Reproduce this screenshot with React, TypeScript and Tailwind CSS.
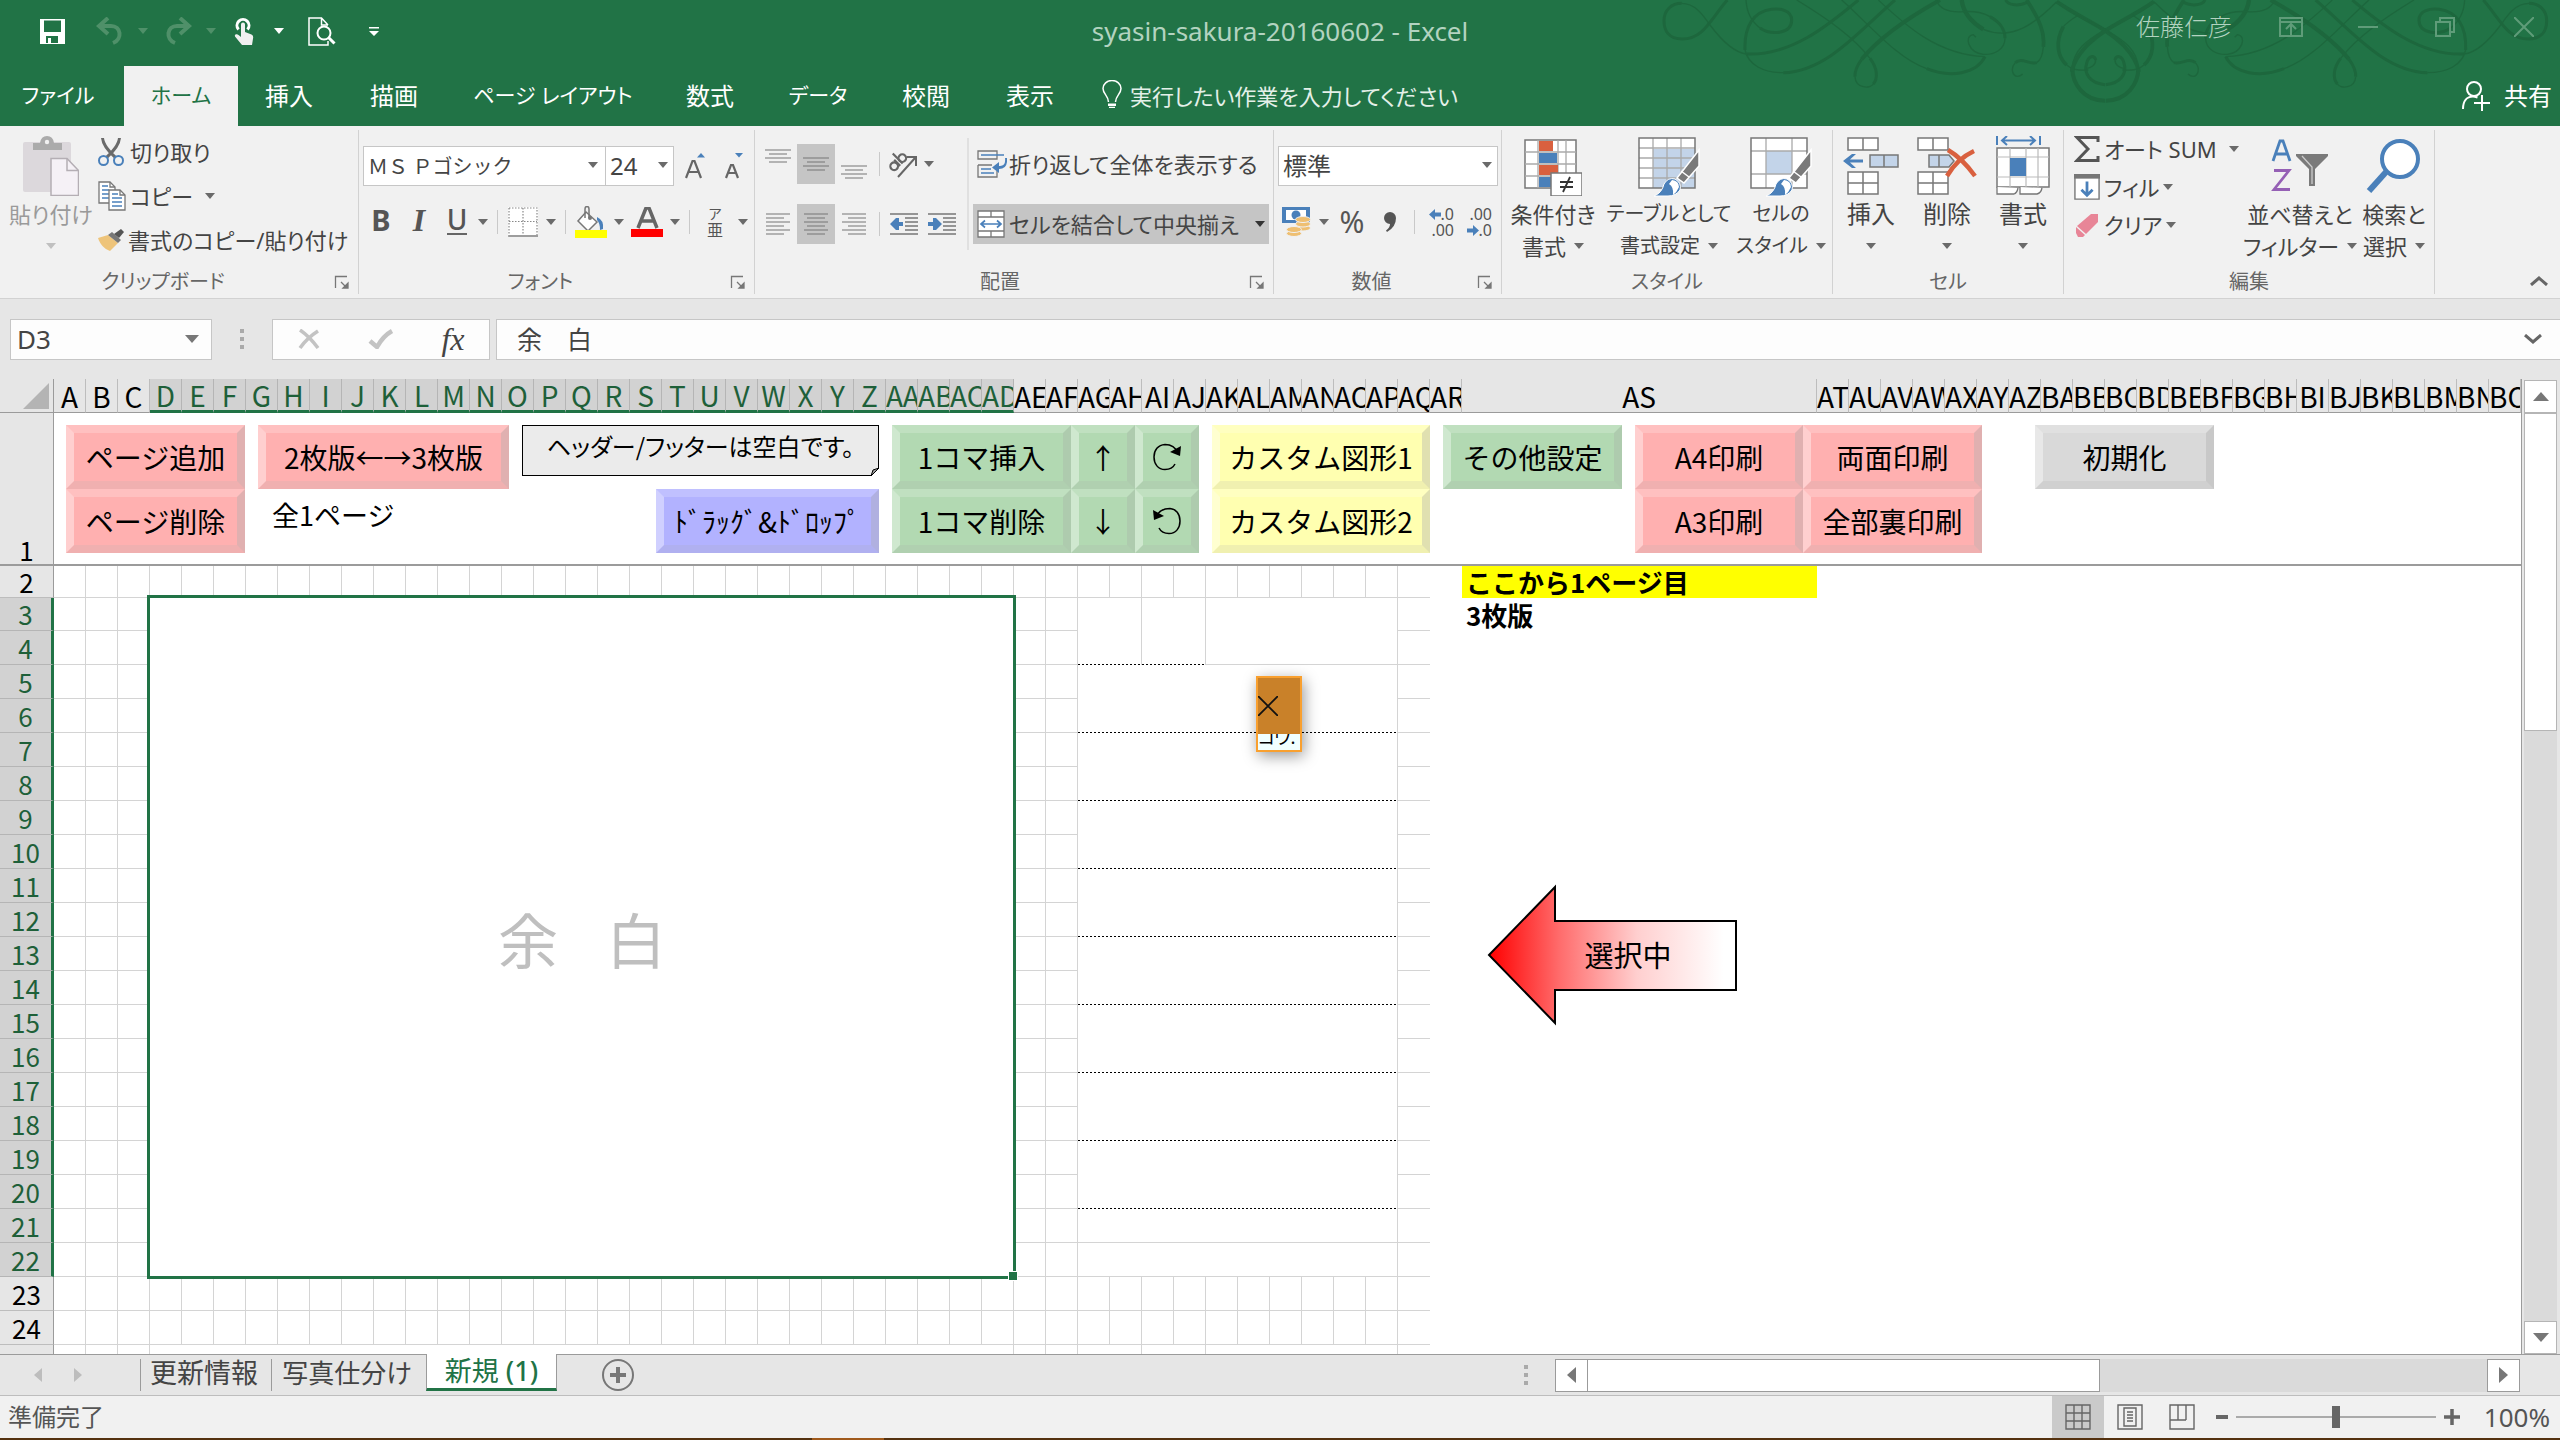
import React from "react";

const UI = "font-['Noto_Sans','Noto_Sans_CJK_JP',sans-serif] [font-feature-settings:'palt']";
const SHEET = "font-['Noto_Sans_CJK_JP',sans-serif] [font-feature-settings:normal]";

/* ---------- small shared pieces ---------- */

function Caret({ className = "text-[#6a6a6a]" }: { className?: string }) {
  return (
    <svg viewBox="0 0 10 6" className={`h-1.5 w-2.5 shrink-0 ${className}`} aria-hidden="true">
      <path d="M0 0h10L5 6z" fill="currentColor" />
    </svg>
  );
}

function CaretButton({ label, className = "w-4" }: { label: string; className?: string }) {
  return (
    <button type="button" aria-label={label} className={`flex h-10 shrink-0 items-center justify-center ${className}`}>
      <Caret />
    </button>
  );
}

function Sep({ className = "w-3" }: { className?: string }) {
  return (
    <span className={`flex h-10 shrink-0 items-center justify-center ${className}`}>
      <span className="h-6 w-px bg-[#c9c9c9]" />
    </span>
  );
}

function IconButton({
  label,
  className = "w-10",
  children,
}: {
  label: string;
  className?: string;
  children: React.ReactNode;
}) {
  return (
    <button type="button" aria-label={label} className={`flex h-10 shrink-0 items-center justify-center ${className}`}>
      {children}
    </button>
  );
}

function Group({
  title,
  launcher,
  className,
  children,
}: {
  title: string;
  launcher?: boolean;
  className: string;
  children: React.ReactNode;
}) {
  return (
    <section aria-label={title} className={`relative my-1 flex shrink-0 flex-col border-r border-[#d2d2d2] ${className}`}>
      <div className="flex h-[138px] items-start">{children}</div>
      <div className={`flex h-7 items-center justify-center pt-1 text-xl text-[#666] ${launcher ? "pr-8" : ""}`}>{title}</div>
      {launcher && (
        <button type="button" aria-label={`${title}の詳細`} className="absolute right-2 bottom-1 h-4 w-4">
          <svg viewBox="0 0 16 16" className="h-4 w-4" fill="none" stroke="#777" strokeWidth="1.3">
            <path d="M1.5 14V2.5H13M7 8l5 5" />
            <path d="M14 9v5H9z" fill="#777" />
          </svg>
        </button>
      )}
    </section>
  );
}

function BigButton({
  icon,
  line1,
  line2,
  className,
  muted,
  text = "text-[22px]",
}: {
  icon: React.ReactNode;
  line1: string;
  line2?: string;
  className: string;
  muted?: boolean;
  text?: string;
}) {
  return (
    <button
      type="button"
      className={`flex shrink-0 flex-col items-center whitespace-nowrap ${muted ? "text-[#9a9a9a]" : "text-[#444]"} ${className}`}
    >
      <span className="mt-1 flex h-16 items-center justify-center">{icon}</span>
      <span className={`h-8 leading-8 ${text}`}>{line1}</span>
      <span className={`flex h-8 items-center gap-2 leading-8 ${text}`}>
        {line2}
        <Caret className={muted ? "text-[#c0c0c0]" : "text-[#6a6a6a]"} />
      </span>
    </button>
  );
}

/* ---------- title bar ---------- */

function Ornament() {
  const half = (
    <g>
      <g strokeWidth="9">
        <path d="M262 0C210 60 190 117 127 117C85 117 72 90 72 62C72 30 95 10 125 10" />
        <path d="M320 162C450 168 560 80 655 0" />
        <path d="M360 84C390 105 455 105 455 60C455 30 420 25 395 28C340 35 312 80 315 150" />
        <path d="M430 218C560 215 660 90 765 0" />
        <path d="M665 178C720 110 810 50 900 0" strokeWidth="12" />
        <path d="M665 178C650 198 644 215 645 230M690 175C713 205 714 235 700 252" />
        <path d="M860 206C930 234 1010 222 1035 170" />
        <path d="M1050 50C1085 70 1095 90 1095 115" />
        <path d="M965 0C970 40 1000 70 1030 88" strokeWidth="13" />
        <path d="M1160 0C1200 60 1215 100 1210 140" strokeWidth="11" />
        <path d="M1190 188C1175 192 1165 186 1150 182C1140 180 1132 182 1126 188" />
        <path d="M1250 5C1330 60 1395 80 1450 135C1480 168 1494 195 1496 215" strokeWidth="12" />
        <path d="M1395 302C1330 302 1297 250 1297 205" strokeWidth="12" />
        <path d="M1270 80C1245 125 1252 170 1280 195" strokeWidth="11" />
        <path d="M1395 254C1350 250 1330 220 1340 190C1345 165 1365 165 1367 180" />
        <path d="M1097 0C1105 18 1140 18 1160 8" />
      </g>
      <g strokeWidth="4">
        <path d="M125 10C170 10 195 55 210 75C240 115 280 158 320 162" />
        <path d="M318 0C320 40 335 65 360 84" />
        <path d="M315 150C325 195 370 218 430 218" />
        <path d="M470 0C560 55 640 110 690 175" />
        <path d="M645 230C647 265 690 268 700 252" />
        <path d="M605 0C690 75 770 175 860 206" />
        <path d="M715 0C790 70 890 165 1035 170" />
        <path d="M888 0C900 30 930 38 970 35C1005 33 1030 38 1050 50" />
        <path d="M1095 115C1095 150 1060 165 1030 163C985 158 970 108 1000 104L1008 112" />
        <path d="M1030 88C1120 125 1190 65 1250 5" />
        <path d="M1210 140C1208 165 1200 182 1190 188M1126 188C1110 205 1118 228 1132 229C1140 229 1145 225 1148 222" />
        <path d="M1315 45C1295 58 1280 68 1270 80M1280 195C1300 213 1320 210 1345 210" />
        <path d="M1297 205C1300 150 1340 120 1395 90C1440 65 1500 45 1540 5" />
        <path d="M1367 180C1367 196 1352 204 1340 205" />
      </g>
    </g>
  );
  return (
    <svg
      viewBox="0 0 2760 378"
      className="pointer-events-none absolute top-0 right-0 h-[126px] w-[920px]"
      fill="none"
      stroke="#1d673d"
      aria-hidden="true"
    >
      {half}
      <g transform="translate(2792 0) scale(-1 1)">{half}</g>
    </svg>
  );
}

function TitleBar() {
  return (
    <div className="relative flex h-[66px] items-center justify-between pr-2 pb-1 pl-[30px]">
      <div className="flex items-center text-white">
        <IconButton label="上書き保存" className="w-11">
          <svg viewBox="0 0 25 25" className="h-[25px] w-[25px]">
            <path d="M0 0h25v25H0zM4 1.500v11.500h17V1.500zM6 17v7h2v-5h3v5h7v-7z" fill="#fff" fillRule="evenodd" />
          </svg>
        </IconButton>
        <IconButton label="元に戻す" className="ml-4 w-10">
          <svg viewBox="0 0 28 28" className="h-7 w-7" fill="none" stroke="#4f9069" strokeWidth="4">
            <path d="M12 1L3 9l9 8" />
            <path d="M4 9h11c10 0 12 13 2 17" />
          </svg>
        </IconButton>
        <span className="w-7 pl-2"><Caret className="text-[#4f9069]" /></span>
        <IconButton label="やり直し" className="w-10">
          <svg viewBox="0 0 28 28" className="h-7 w-7" fill="none" stroke="#4f9069" strokeWidth="4">
            <path d="M16 1l9 8-9 8" />
            <path d="M24 9H13C3 9 1 22 11 26" />
          </svg>
        </IconButton>
        <span className="w-7 pl-2"><Caret className="text-[#4f9069]" /></span>
        <IconButton label="タッチ/マウス モードの切り替え" className="w-9">
          <svg viewBox="0 0 20 27" className="h-[27px] w-5">
            <path d="M4.500 11.500A6 6 0 1 1 13.500 11.500" fill="none" stroke="#fff" strokeWidth="3" />
            <path d="M7 6.500q0-2 2-2t2 2V14l6.500 2.500q2 1 1.700 3L18 27H8L1 18.500q-.8-1.800 1-2.300 1.500-.3 2.500.8L7 19z" fill="#f0f0f0" />
          </svg>
        </IconButton>
        <span className="w-7 pl-3"><Caret className="text-white" /></span>
        <IconButton label="印刷プレビュー" className="ml-1 w-14">
          <svg viewBox="0 0 28 29" className="h-[29px] w-7" fill="none" stroke="#fff" strokeWidth="1.500">
            <path d="M20 8L13.500 1H1v27h19v-4M13.500 1v7H20" />
            <circle cx="16" cy="16" r="6.500" strokeWidth="2" />
            <path d="M20.500 20.500l6 6" strokeWidth="3" />
          </svg>
        </IconButton>
        <IconButton label="クイック アクセス ツール バーのユーザー設定" className="ml-3 w-6">
          <svg viewBox="0 0 10 9" className="h-[9px] w-2.5" fill="#fff">
            <path d="M0 0h10v1.500H0zM0 4h10L5 9z" />
          </svg>
        </IconButton>
      </div>
      <h1 className="absolute left-1/2 -translate-x-1/2 text-[26px] whitespace-nowrap text-[#b3d3c0]">
        syasin-sakura-20160602 - Excel
      </h1>
      <div className="flex items-center pb-2 text-[#5f9c79]">
        <span className="mr-7 text-2xl font-light text-[#b3d3c0]">佐藤仁彦</span>
        <IconButton label="リボンの表示オプション" className="w-[62px]">
          <svg viewBox="0 0 24 20" className="h-5 w-6" fill="none" stroke="currentColor" strokeWidth="2">
            <path d="M1 1h22v18H1zM1 5h22M12 18V8M7 12l5-5 5 5" />
          </svg>
        </IconButton>
        <IconButton label="最小化" className="w-[92px]">
          <span className="h-0.5 w-5 bg-[#5f9c79]" />
        </IconButton>
        <IconButton label="元に戻す (縮小)" className="w-[62px]">
          <svg viewBox="0 0 20 20" className="h-5 w-5" fill="none" stroke="currentColor" strokeWidth="2">
            <path d="M1 5h14v14H1zM5 5V1h14v14h-4" />
          </svg>
        </IconButton>
        <IconButton label="閉じる" className="ml-5 w-14">
          <svg viewBox="0 0 20 20" className="h-5 w-5" fill="none" stroke="currentColor" strokeWidth="2">
            <path d="M0 0l20 20M20 0L0 20" />
          </svg>
        </IconButton>
      </div>
    </div>
  );
}

function RibbonTabs() {
  const tabs = [
    { name: "ファイル", w: "w-[124px] pr-2 text-[21px]" },
    { name: "ホーム", w: "w-[114px] text-[21px]", active: true },
    { name: "挿入", w: "w-[102px] text-2xl" },
    { name: "描画", w: "w-[108px] text-2xl" },
    { name: "ページ レイアウト", w: "w-[210px] text-[21px]" },
    { name: "数式", w: "w-[104px] text-2xl" },
    { name: "データ", w: "w-[112px] text-[21px]" },
    { name: "校閲", w: "w-[104px] text-2xl" },
    { name: "表示", w: "w-[104px] text-2xl" },
  ];
  return (
    <nav className="relative flex h-[60px] items-stretch text-[22px] text-white">
      {tabs.map((t) => (
        <button
          key={t.name}
          type="button"
          className={`${t.w} shrink-0 whitespace-nowrap ${t.active ? "bg-[#f1f1f1] text-[#217346]" : ""}`}
        >
          {t.name}
        </button>
      ))}
      <button type="button" className="flex items-center gap-2 pl-5 text-[#e4f0e9]">
        <svg viewBox="0 0 20 28" className="mb-1 h-7 w-5" fill="none" stroke="#fff" strokeWidth="1.500">
          <path d="M6.500 22c0-6-5.500-8-5.500-13.500a9 8 0 0 1 18 0C19 14 13.500 16 13.500 22" />
          <path d="M6 23.500h8v2.500H6z" fill="#fff" stroke="none" />
          <path d="M7 27.500h6" />
        </svg>
        実行したい作業を入力してください
      </button>
      <button type="button" className="ml-auto flex items-center gap-3 pr-2 text-2xl">
        <svg viewBox="0 0 30 30" className="h-[30px] w-[30px]" fill="none" stroke="#fff" strokeWidth="2">
          <circle cx="12" cy="8" r="7" />
          <path d="M1 28c0-8 4-12.500 10-12.500 2 0 3 .5 4.500 1M12 22h16M20 14v16" />
        </svg>
        共有
      </button>
    </nav>
  );
}

/* ---------- ribbon icons ---------- */

const PasteIcon = () => (
  <svg viewBox="0 0 56 60" className="h-[60px] w-14">
    <rect x="0" y="6" width="48" height="50" rx="2" fill="#dcd8dc" />
    <path d="M10 14V7h7q1-7 7-7t7 7h8v7z" fill="#ababab" />
    <circle cx="24" cy="6" r="2.200" fill="#f1f1f1" />
    <path d="M28 22.500h16l11.500 12v25H28z" fill="#f5f1f6" stroke="#b4aeb4" strokeWidth="1.500" />
    <path d="M44 22.500v12h11.500" fill="none" stroke="#b4aeb4" strokeWidth="1.500" />
  </svg>
);

const ScissorsIcon = () => (
  <svg viewBox="0 0 26 28" className="h-7 w-[26px]" fill="none">
    <path d="M4.500 0C5 6 11 14 17.500 19.500M21.500 0C21 6 15 14 8.500 19.500" stroke="#6a6a6a" strokeWidth="3" />
    <circle cx="5.500" cy="22.500" r="4.500" stroke="#4a80ba" strokeWidth="2" />
    <circle cx="20.500" cy="22.500" r="4.500" stroke="#4a80ba" strokeWidth="2" />
  </svg>
);

const CopyIcon = () => (
  <svg viewBox="0 0 28 30" className="h-[30px] w-7" stroke="#777" strokeWidth="1.300">
    <path d="M1 1h11l5 5v16H1z" fill="#fff" />
    <path d="M12 1v5h5" fill="none" />
    <path d="M4 5h6M4 9h7M4 13h7M4 17h7" stroke="#4a80ba" />
    <path d="M11 9h11l5 5v15H11z" fill="#fff" />
    <path d="M22 9v5h5" fill="none" />
    <path d="M14 13h6M14 17h10M14 21h10M14 25h10" stroke="#4a80ba" />
  </svg>
);

const BrushIcon = () => (
  <svg viewBox="0 0 26 22" className="h-[22px] w-[26px]">
    <path d="M0 9l10-3 10 8-8 8C6 20 2 15 0 9z" fill="#eec47a" />
    <path d="M10 6l4-3 9 8-3 3z" fill="#777" />
    <path d="M16 5l7-5 3 3-5 6z" fill="#555" />
  </svg>
);

function Lines({ widths }: { widths: "center" | "left" | "right" | "even" }) {
  const d = {
    center: "M0 1h26M4 5h18M0 9h26M4 13h18",
    even: "M0 1h24M3 5h18M0 9h24M3 13h18M0 17h24M3 21h18",
    left: "M0 1h24M0 5h18M0 9h24M0 13h18M0 17h24M0 21h18",
    right: "M0 1h24M6 5h18M0 9h24M6 13h18M0 17h24M6 21h18",
  }[widths];
  return widths === "center" ? (
    <svg viewBox="0 0 26 14" className="h-3.5 w-[26px]" stroke="#777" strokeWidth="1.200"><path d={d} /></svg>
  ) : (
    <svg viewBox="0 0 24 22" className="h-[22px] w-6" stroke="#777" strokeWidth="1.200"><path d={d} /></svg>
  );
}

function IndentIcon({ flip }: { flip?: boolean }) {
  return (
    <svg viewBox="0 0 28 22" className="h-[22px] w-7" fill="none" stroke="#777" strokeWidth="1.300">
      <path d="M0 1h28M15 5h13M15 9h13M15 13h13M15 17h13M0 21h28" />
      {flip ? (
        <path d="M0 9h5V5h3l6 6-6 6H5v-4H0z" fill="#4a80ba" stroke="none" />
      ) : (
        <path d="M13 9H9V5H6l-6 6 6 6h3v-4h4z" fill="#4a80ba" stroke="none" />
      )}
    </svg>
  );
}

const BordersIcon = () => (
  <svg viewBox="0 0 30 30" className="h-[30px] w-[30px]" fill="none" stroke="#888" strokeWidth="1.200">
    <path d="M0 0h30v28H0z" fill="#fff" stroke="none" />
    <path d="M1 1h28v27M1 1v27M15 1v27M1 14.500h28" strokeDasharray="1.500 1.500" />
    <path d="M0 29h30" stroke="#666" />
  </svg>
);

const FillIcon = () => (
  <svg viewBox="0 0 32 32" className="h-8 w-8">
    <path d="M11 6l11 10-9 9L3 15z" fill="#fff" stroke="#777" strokeWidth="1.500" />
    <path d="M10 12V3q0-2.500 2-2.500t2 2.500v9" fill="none" stroke="#777" strokeWidth="1.500" />
    <circle cx="15" cy="12" r="2" fill="#777" />
    <path d="M22 11q7 3 6 12l-3 1q0-7-3-10z" fill="#4a80ba" />
    <rect y="24" width="32" height="8" fill="#ff0" />
  </svg>
);

const FontColorIcon = () => (
  <svg viewBox="0 0 32 30" className="h-[30px] w-8">
    <path d="M7 21L15 1h3l8 20M10.500 14h12" fill="none" stroke="#666" strokeWidth="3.500" />
    <rect y="22" width="32" height="8" fill="#f00" />
  </svg>
);

const OrientationIcon = () => (
  <svg viewBox="0 0 30 28" className="h-7 w-[30px]" fill="none" stroke="#666">
    <path d="M10 27L27 8M19 7h9v9" strokeWidth="2" />
    <g transform="rotate(-45 9 12)" strokeWidth="2.200">
      <circle cx="4" cy="13" r="3.800" />
      <path d="M8.500 8.500V17M12 3v14" />
      <circle cx="15.500" cy="13" r="3.800" />
    </g>
  </svg>
);

const WrapIcon = () => (
  <svg viewBox="0 0 30 28" className="h-7 w-[30px]" fill="none">
    <path d="M1 1h19v8H1zM1 15h14M1 15v12h19v-6" stroke="#777" strokeWidth="1.300" />
    <path d="M4 5h23M4 19h10M4 23h13" stroke="#4a80ba" strokeWidth="1.500" />
    <path d="M28 8q1 8-5 8h-1v-4l-7 5.500 7 5.500v-4q9 0 8-11z" fill="#4a80ba" />
  </svg>
);

const MergeIcon = () => (
  <svg viewBox="0 0 28 28" className="h-7 w-7" fill="none">
    <path d="M1 1h26v26H1z" fill="#fff" />
    <path d="M1 1h26v26H1zM1 7h26M1 21h26M14 1v6M14 21v6" stroke="#777" strokeWidth="1.300" />
    <path d="M4 14h20M8 10.500L4 14l4 3.500M20 10.500l4 3.500-4 3.500" stroke="#4a80ba" strokeWidth="1.700" />
  </svg>
);

const CurrencyIcon = () => (
  <svg viewBox="0 0 30 30" className="h-[30px] w-[30px]">
    <path d="M0 0h28v16H0z" fill="#4a80ba" />
    <path d="M4 3h20v10H4z" fill="#fff" />
    <circle cx="14" cy="8" r="4.500" fill="#4a80ba" />
    <g fill="#eebf72" stroke="#f1f1f1" strokeWidth="1">
      <ellipse cx="21" cy="21" rx="7.500" ry="3" /><ellipse cx="21" cy="17" rx="7.500" ry="3" /><ellipse cx="21" cy="12.500" rx="7.500" ry="3" />
      <ellipse cx="12" cy="26.500" rx="7.500" ry="3" /><ellipse cx="12" cy="22.500" rx="7.500" ry="3" />
    </g>
  </svg>
);

function DecimalIcon({ more }: { more?: boolean }) {
  return (
    <span className="flex w-[30px] flex-col text-base leading-4 text-[#555]">
      <span className="flex items-center justify-end">
        {more && (
          <svg viewBox="0 0 12 11" className="h-[11px] w-3"><path d="M0 5.500L6 0v3.500h6v4H6V11z" fill="#4a80ba" /></svg>
        )}
        {more ? ".0" : ".00"}
      </span>
      <span className="flex items-center justify-end">
        {!more && (
          <svg viewBox="0 0 12 11" className="h-[11px] w-3"><path d="M12 5.500L6 0v3.500H0v4h6V11z" fill="#4a80ba" /></svg>
        )}
        {more ? ".00" : ".0"}
      </span>
    </span>
  );
}

const ConditionalIcon = () => (
  <svg viewBox="0 0 58 60" className="h-[60px] w-[58px]">
    <path d="M1 4h51v48H1z" fill="#fff" stroke="#777" strokeWidth="1.500" />
    <path d="M1 16h51M1 28h51M1 40h51M14 4v48M34 4v48M42 4v48" stroke="#aaa" strokeWidth="1.300" />
    <path d="M15 5h14v10H15zM15 29h19v10H15z" fill="#d9603f" />
    <path d="M15 17h18v10H15zM15 41h12v10H15z" fill="#4a80ba" />
    <path d="M27 37h31v23H27z" fill="#fff" stroke="#777" strokeWidth="1.500" />
    <path d="M36 46h13M36 51h13M46 41l-7 15" stroke="#333" strokeWidth="1.800" />
  </svg>
);

function StyleBrushIcon({ cell }: { cell?: boolean }) {
  return (
    <svg viewBox="0 0 62 62" className="h-[62px] w-[62px]">
      <path d="M1 3h56v50H1z" fill="#fff" />
      {cell ? <path d="M16 16h26v23H16z" fill="#c3d4e9" /> : <path d="M15 14h42v39H15z" fill="#c3d4e9" />}
      {cell ? (
        <path d="M1 16h56M1 39h56M16 3v50M42 3v50" stroke="#aaa" strokeWidth="1.300" />
      ) : (
        <path d="M1 13h56M1 23h56M1 33h56M1 43h56M15 3v50M29 3v50M43 3v50" stroke="#aaa" strokeWidth="1.300" />
      )}
      <path d="M1 3h56v50H1z" fill="none" stroke="#777" strokeWidth="1.500" />
      <path d="M61 15v16L46 48l-7-5z" fill="#7a7a7a" stroke="#fff" strokeWidth="1.500" />
      <path d="M43 36l8 6" stroke="#fff" strokeWidth="1.500" />
      <path d="M16 61q8-3 10-12 4-7 11-5 7 4 5 11-4 6-12 6z" fill="#4a80ba" stroke="#fff" strokeWidth="1" />
      <path d="M34 45q7 1 7 7-2 5-6 8 1-8-4-11z" fill="#fff" />
    </svg>
  );
}

const InsertIcon = () => (
  <svg viewBox="0 0 56 58" className="h-[58px] w-14" fill="#fff" stroke="#777" strokeWidth="1.500">
    <path d="M5 1h30v12H5zM20 1v12M5 35h30v22H5zM20 35v22M5 46h30" />
    <path d="M27 18h28v12H27zM41 18v12" fill="#c3d4e9" />
    <path d="M0 24l9-7h4l-6 5.500h13v3H7L13 31H9z" fill="#4a80ba" stroke="none" />
  </svg>
);

const DeleteIcon = () => (
  <svg viewBox="0 0 60 58" className="h-[58px] w-[60px]" fill="#fff" stroke="#777" strokeWidth="1.500">
    <path d="M1 1h30v12H1zM16 1v12M1 35h30v22H1zM16 35v22M1 46h30" />
    <path d="M12 18h20l5 6-5 6H12zM22 18v12" fill="#c3d4e9" />
    <path d="M31 13q14 8 27 26M57 14Q40 22 30 39" fill="none" stroke="#d9603f" strokeWidth="4.500" />
  </svg>
);

const FormatIcon = () => (
  <svg viewBox="0 0 54 60" className="h-[60px] w-[54px]" fill="none">
    <path d="M1 12h52v39H1z" fill="#fff" stroke="#777" strokeWidth="1.500" />
    <path d="M1 21h52M1 41h52M14 12v39M30 12v39M42 12v39" stroke="#bbb" strokeWidth="1.200" />
    <path d="M14 22h16v18H14z" fill="#4a80ba" />
    <path d="M1 51v7h17q3-1 4-6M24 51v7h17q4-1 5-6" fill="#fff" stroke="#777" strokeWidth="1.300" />
    <path d="M1 0v9M44 0v9M6 4.500h33M11 0L6 4.500 11 9M34 0l5 4.500L34 9" stroke="#4a80ba" strokeWidth="2" />
  </svg>
);

const SortIcon = () => (
  <svg viewBox="0 0 58 54" className="h-[54px] w-[58px]" fill="none">
    <path d="M2 22L9 2h3l7 20M5 15h11" stroke="#4a80ba" strokeWidth="2.800" />
    <path d="M3 31.500h15L3 50.500h16" stroke="#9560b5" strokeWidth="2.800" />
    <path d="M25 15h32v2L44 30v17h-6V30L25 17z" fill="#7a7a7a" />
    <path d="M31 17l10 11v17" stroke="#ccc" strokeWidth="1.300" />
  </svg>
);

const FindIcon = () => (
  <svg viewBox="0 0 56 56" className="h-14 w-14" fill="none" stroke="#4a80ba">
    <circle cx="34" cy="21" r="18" fill="#fff" strokeWidth="4" />
    <path d="M20 34L3 53" strokeWidth="6" />
  </svg>
);

/* ---------- ribbon ---------- */

function Ribbon() {
  return (
    <div className="flex h-[173px] shrink-0 border-b border-[#d2d2d2] bg-[#f1f1f1] text-[22px] text-[#444]">
      <Group title="クリップボード" launcher className="w-[359px]">
        <BigButton icon={<PasteIcon />} line1="貼り付け" muted className="w-[98px] pl-1" />
        <div className="flex flex-col whitespace-nowrap text-[22px]">
          <button type="button" className="flex h-11 items-center gap-1.5">
            <ScissorsIcon />切り取り
          </button>
          <button type="button" className="flex h-11 items-center gap-1">
            <CopyIcon />コピー<span className="pl-2"><Caret /></span>
          </button>
          <button type="button" className="flex h-11 items-center gap-1">
            <BrushIcon />書式のコピー/貼り付け
          </button>
        </div>
      </Group>

      <Group title="フォント" launcher className="w-[396px] px-1">
        <div className="flex flex-col gap-4 pt-4">
          <div className="flex h-10 items-center">
            <label className="relative">
              <select aria-label="フォント" className={`h-10 w-[243px] appearance-none border border-[#c6c6c6] bg-white px-1 text-xl ${SHEET}`}>
                <option>ＭＳ Ｐゴシック</option>
              </select>
              <span className="pointer-events-none absolute top-4 right-2 flex"><Caret /></span>
            </label>
            <label className="relative -ml-px">
              <select aria-label="フォント サイズ" className="h-10 w-[69px] appearance-none border border-[#c6c6c6] bg-white px-1 text-2xl">
                <option>24</option>
              </select>
              <span className="pointer-events-none absolute top-4 right-1.5 flex"><Caret /></span>
            </label>
            <IconButton label="フォント サイズの拡大" className="ml-1 w-9">
              <svg viewBox="0 0 22 26" className="h-[26px] w-[22px]" fill="none">
                <path d="M1 25L7.500 8h2L16 25M4 19h9" stroke="#666" strokeWidth="2.200" />
                <path d="M12 4.500h8L16 0z" fill="#4a80ba" />
              </svg>
            </IconButton>
            <IconButton label="フォント サイズの縮小" className="w-10">
              <svg viewBox="0 0 22 26" className="h-[26px] w-[22px]" fill="none">
                <path d="M3 25L8 12h2l5 13M5 20h8" stroke="#666" strokeWidth="2.200" />
                <path d="M12 0h8l-4 4.500z" fill="#4a80ba" />
              </svg>
            </IconButton>
          </div>
          <div className="flex h-10 items-center text-[#555]">
            <IconButton label="太字" className="w-9 pb-1"><span className="text-[29px] leading-8 font-bold">B</span></IconButton>
            <IconButton label="斜体" className="w-10 pb-1"><span className="font-['Liberation_Serif',serif] text-[32px] leading-8 font-bold italic">I</span></IconButton>
            <IconButton label="下線" className="w-9 pb-1"><span className="border-b-2 border-[#666] text-[28px] leading-7 font-medium">U</span></IconButton>
            <CaretButton label="下線の種類" />
            <Sep />
            <IconButton label="罫線"><BordersIcon /></IconButton>
            <CaretButton label="罫線の種類" />
            <Sep />
            <IconButton label="塗りつぶしの色"><FillIcon /></IconButton>
            <CaretButton label="塗りつぶしの色の一覧" />
            <IconButton label="フォントの色"><FontColorIcon /></IconButton>
            <CaretButton label="フォントの色の一覧" />
            <Sep />
            <IconButton label="ふりがな">
              <span className="flex flex-col items-center text-sm leading-4">
                <span>ア</span>
                <span className="text-base leading-4">亜</span>
              </span>
            </IconButton>
            <CaretButton label="ふりがなの設定" />
          </div>
        </div>
      </Group>

      <Group title="配置" launcher className="w-[519px] pl-1">
        <div className="flex flex-col gap-5 pt-3.5">
          <div className="flex h-10 items-center">
            <IconButton label="上揃え" className="w-[38px] pb-4"><Lines widths="center" /></IconButton>
            <IconButton label="上下中央揃え" className="w-[38px] bg-[#c5c5c5]"><Lines widths="center" /></IconButton>
            <IconButton label="下揃え" className="w-[38px] pt-4"><Lines widths="center" /></IconButton>
            <Sep className="w-3" />
            <IconButton label="方向" className="w-9"><OrientationIcon /></IconButton>
            <CaretButton label="方向の種類" />
          </div>
          <div className="flex h-10 items-center">
            <IconButton label="左揃え" className="w-[38px]"><Lines widths="left" /></IconButton>
            <IconButton label="中央揃え" className="w-[38px] bg-[#c5c5c5]"><Lines widths="even" /></IconButton>
            <IconButton label="右揃え" className="w-[38px]"><Lines widths="right" /></IconButton>
            <Sep className="w-3" />
            <IconButton label="インデントを減らす" className="w-[38px]"><IndentIcon /></IconButton>
            <IconButton label="インデントを増やす" className="w-[38px]"><IndentIcon flip /></IconButton>
          </div>
        </div>
        <div className="mt-2 ml-1.5 h-28 w-0.5 bg-[#e0e0e0]" />
        <div className="ml-1 flex flex-col gap-5 pt-3.5 whitespace-nowrap">
          <button type="button" className="flex h-10 items-center gap-0.5 pl-1">
            <WrapIcon />折り返して全体を表示する
          </button>
          <div className="flex h-10 w-[296px] items-center justify-between bg-[#c5c5c5] pr-1">
            <button type="button" className="flex items-center gap-1 pl-1">
              <MergeIcon />セルを結合して中央揃え
            </button>
            <button type="button" aria-label="結合の種類"><Caret className="text-[#333]" /></button>
          </div>
        </div>
      </Group>

      <Group title="数値" launcher className="w-[228px] px-1">
        <div className="flex flex-col gap-4 pt-4">
          <label className="relative">
            <select aria-label="表示形式" className="h-10 w-[220px] appearance-none border border-[#c6c6c6] bg-white px-1 text-2xl">
              <option>標準</option>
            </select>
            <span className="pointer-events-none absolute top-4 right-1.5 flex"><Caret /></span>
          </label>
          <div className="flex h-10 items-center text-[#555]">
            <IconButton label="通貨表示形式" className="w-[38px]"><CurrencyIcon /></IconButton>
            <CaretButton label="通貨の種類" />
            <IconButton label="パーセント スタイル"><span className="text-3xl leading-8">%</span></IconButton>
            <IconButton label="桁区切りスタイル" className="w-9">
              <svg viewBox="0 0 12 20" className="h-5 w-3" fill="#555"><path d="M6 0a6 6 0 0 1 6 6q0 9-9 14l-1-1.500q4-3 4-6.500A6 6 0 1 1 6 0z" /></svg>
            </IconButton>
            <Sep className="w-3" />
            <IconButton label="小数点以下の表示桁数を増やす" className="w-[38px]"><DecimalIcon more /></IconButton>
            <IconButton label="小数点以下の表示桁数を減らす" className="w-[38px]"><DecimalIcon /></IconButton>
          </div>
        </div>
      </Group>

      <Group title="スタイル" className="w-[331px]">
        <BigButton icon={<ConditionalIcon />} line1="条件付き" line2="書式" className="w-[102px]" />
        <BigButton icon={<StyleBrushIcon />} line1="テーブルとして" line2="書式設定" text="text-xl" className="w-[130px]" />
        <BigButton icon={<StyleBrushIcon cell />} line1="セルの" line2="スタイル" text="text-xl" className="w-[94px]" />
      </Group>

      <Group title="セル" className="w-[231px]">
        <BigButton icon={<InsertIcon />} line1="挿入" className="w-[76px]" text="text-2xl" />
        <BigButton icon={<DeleteIcon />} line1="削除" className="w-[76px]" text="text-2xl" />
        <BigButton icon={<FormatIcon />} line1="書式" className="w-[76px]" text="text-2xl" />
      </Group>

      <Group title="編集" className="w-[371px]">
        <div className="flex w-[180px] flex-col pl-2.5 whitespace-nowrap">
          <button type="button" className="flex h-[38px] items-center gap-1">
            <svg viewBox="0 0 26 26" className="h-[26px] w-[26px]" fill="none" stroke="#555" strokeWidth="3">
              <path d="M24 6V1.500H3L14 13 3 24.500h21V20" />
            </svg>
            オート SUM<span className="pl-2"><Caret /></span>
          </button>
          <button type="button" className="flex h-[38px] items-center gap-1">
            <svg viewBox="0 0 28 28" className="h-[26px] w-[26px]">
              <path d="M1 1h26v26H1z" fill="#fff" stroke="#777" strokeWidth="1.500" />
              <path d="M0 0h28v5H0z" fill="#777" />
              <path d="M14 8v14M8 17l6 6 6-6" fill="none" stroke="#4a80ba" strokeWidth="3" />
            </svg>
            フィル<Caret />
          </button>
          <button type="button" className="flex h-[38px] items-center gap-1">
            <svg viewBox="0 0 24 24" className="h-6 w-[26px]">
              <path d="M16 1h7v8L11 21 2 13z" fill="#e88597" />
              <path d="M1 14l9 8-2 2H3l-2-4z" fill="#e88597" />
            </svg>
            クリア<Caret />
          </button>
        </div>
        <BigButton icon={<SortIcon />} line1="並べ替えと" line2="フィルター" className="w-[112px]" />
        <BigButton icon={<FindIcon />} line1="検索と" line2="選択" className="w-[76px]" />
      </Group>

      <div className="flex flex-1 items-end justify-end">
        <button type="button" aria-label="リボンを折りたたむ" className="mr-2 mb-2 p-1">
          <svg viewBox="0 0 18 10" className="h-2.5 w-[18px]" fill="none" stroke="#666" strokeWidth="3">
            <path d="M1 9l8-7 8 7" />
          </svg>
        </button>
      </div>
    </div>
  );
}

/* ---------- formula bar ---------- */

function FormulaBar() {
  return (
    <div className="flex h-20 shrink-0 items-center bg-[#e6e6e6] pl-2.5 text-[#444]">
      <div className="flex h-[41px] w-[202px] items-center border border-[#c6c6c6] bg-[#fdfdfd] pr-3">
        <input aria-label="名前ボックス" defaultValue="D3" className="min-w-0 flex-1 bg-transparent pl-1.5 text-[26px] outline-none" />
        <button type="button" aria-label="名前の一覧">
          <svg viewBox="0 0 14 8" className="h-2 w-3.5" fill="#777"><path d="M0 0h14L7 8z" /></svg>
        </button>
      </div>
      <div className="flex w-[60px] flex-col items-center gap-1">
        <span className="size-1 bg-[#aaa]" />
        <span className="size-1 bg-[#aaa]" />
        <span className="size-1 bg-[#aaa]" />
      </div>
      <div className="flex h-[41px] w-[218px] items-center border border-[#c6c6c6] bg-[#fdfdfd]">
        <button type="button" aria-label="キャンセル" className="flex flex-1 justify-center">
          <svg viewBox="0 0 24 20" className="h-5 w-6" fill="none" stroke="#c3c3c3" strokeWidth="3.500"><path d="M3 1q9 6 18 18M21 2Q10 9 3 19" /></svg>
        </button>
        <button type="button" aria-label="入力" className="flex flex-1 justify-center">
          <svg viewBox="0 0 26 20" className="h-5 w-[26px]" fill="none" stroke="#c3c3c3" strokeWidth="4.500"><path d="M2 12l7 6Q15 7 24 2" /></svg>
        </button>
        <button type="button" aria-label="関数の挿入" className="flex-1 font-['Liberation_Serif',serif] text-[32px] leading-8 italic">
          fx
        </button>
      </div>
      <div className="ml-1.5 flex h-[41px] flex-1 items-center border border-r-0 border-[#c6c6c6] bg-[#fdfdfd] pr-[18px]">
        <input aria-label="数式バー" defaultValue="余　白" className={`min-w-0 flex-1 bg-transparent pl-5 text-[25px] outline-none ${SHEET}`} />
        <button type="button" aria-label="数式バーの展開">
          <svg viewBox="0 0 18 10" className="h-2.5 w-[18px]" fill="none" stroke="#666" strokeWidth="3"><path d="M1 1l8 7 8-7" /></svg>
        </button>
      </div>
    </div>
  );
}

/* ---------- sheet ---------- */

const LETTERS = "ABCDEFGHIJKLMNOPQRSTUVWXYZ";
const COLUMNS = Array.from({ length: 67 }, (_, i) =>
  i < 26 ? LETTERS[i] : LETTERS[Math.floor(i / 26) - 1] + LETTERS[i % 26],
);
const GRID = "border-[#d4d4d4]";
const DOTTED =
  "bg-[repeating-linear-gradient(90deg,#000_0_2px,transparent_2px_4px)] bg-[length:100%_1px] bg-bottom bg-no-repeat";

const TONES = {
  red: "border-t-[#ffc0c0] border-l-[#ffcfcf] border-r-[#e0b0b0] border-b-[#f0b0b0] bg-[#ffb0b0]",
  green: "border-t-[#c0e0c0] border-l-[#cfe8cf] border-r-[#aecbae] border-b-[#b0d0b0] bg-[#b2d9b2]",
  yellow: "border-t-[#ffffc0] border-l-[#ffffd0] border-r-[#e0e0b0] border-b-[#f0f0b0] bg-[#ffffb0]",
  blue: "border-t-[#c0c0ff] border-l-[#d0d0ff] border-r-[#b0b0e0] border-b-[#b0b0f0] bg-[#b2b2ff]",
  gray: "border-t-[#e0e0e0] border-l-[#e8e8e8] border-r-[#c8c8c8] border-b-[#d0d0d0] bg-[#d9d9d9]",
};

function MacroButton({
  tone,
  className,
  label,
  children,
}: {
  tone: keyof typeof TONES;
  className: string;
  label?: string;
  children: React.ReactNode;
}) {
  return (
    <button
      type="button"
      aria-label={label}
      className={`flex h-16 shrink-0 items-center justify-center border-8 text-[28px] leading-8 whitespace-nowrap text-black ${TONES[tone]} ${className}`}
    >
      {children}
    </button>
  );
}

function RotateArrow({ back }: { back?: boolean }) {
  return (
    <svg viewBox="0 0 30 28" className="h-7 w-[30px]" fill="none" stroke="#000" strokeWidth="1.500">
      {back ? (
        <>
          <path d="M4 10C7 3 13 1.500 18 1.500C24 2 28 7 28 14C28 21 24 26.500 17 26.500C13 26.500 9 25 7 21" />
          <path d="M1 3l1 10 10-4z" fill="#000" stroke="none" />
        </>
      ) : (
        <>
          <path d="M26 10C23 3 17 1.500 13 1.500C6 2 2 7 2 14C2 21 6 26.500 13 26.500C17 26.500 21 25 23 21" />
          <path d="M29 3l-1 10-10-4z" fill="#000" stroke="none" />
        </>
      )}
    </svg>
  );
}

function MacroBar() {
  return (
    <div className="flex h-[151px] items-start gap-[13px] overflow-hidden pt-3 pl-3">
      <div className="flex flex-col">
        <MacroButton tone="red" className="w-[179px]">ページ追加</MacroButton>
        <MacroButton tone="red" className="w-[179px]">ページ削除</MacroButton>
      </div>
      <div className="flex flex-col">
        <MacroButton tone="red" className="w-[251px]">2枚版←→3枚版</MacroButton>
        <p className="pt-2.5 pl-3.5 text-[27px] leading-8">全1ページ</p>
      </div>
      <div className="flex w-[357px] flex-col items-end gap-[13px]">
        <div className="relative flex h-[51px] w-full items-start justify-center border border-black bg-[#ebebeb] pt-1 text-2xl leading-8 whitespace-nowrap [font-feature-settings:'palt']">
          ヘッダー/フッターは空白です。
          <svg viewBox="0 0 8 8" className="absolute -right-px -bottom-px h-2 w-2">
            <path d="M0 8L2 2l6-2v8z" fill="#fff" />
            <path d="M0 8L2 2l6-2z" fill="#999" stroke="#000" />
          </svg>
        </div>
        <MacroButton tone="blue" className="w-[223px]">ﾄﾞﾗｯｸﾞ&ﾄﾞﾛｯﾌﾟ</MacroButton>
      </div>
      <div className="grid grid-cols-[179px_64px_64px]">
        <MacroButton tone="green" className="w-full">1コマ挿入</MacroButton>
        <MacroButton tone="green" className="w-full">↑</MacroButton>
        <MacroButton tone="green" className="w-full" label="右回転"><RotateArrow /></MacroButton>
        <MacroButton tone="green" className="w-full">1コマ削除</MacroButton>
        <MacroButton tone="green" className="w-full">↓</MacroButton>
        <MacroButton tone="green" className="w-full" label="左回転"><RotateArrow back /></MacroButton>
      </div>
      <div className="flex flex-col">
        <MacroButton tone="yellow" className="w-[218px]">カスタム図形1</MacroButton>
        <MacroButton tone="yellow" className="w-[218px]">カスタム図形2</MacroButton>
      </div>
      <MacroButton tone="green" className="w-[179px]">その他設定</MacroButton>
      <div className="grid grid-cols-[168px_179px]">
        <MacroButton tone="red" className="w-full">A4印刷</MacroButton>
        <MacroButton tone="red" className="w-full">両面印刷</MacroButton>
        <MacroButton tone="red" className="w-full">A3印刷</MacroButton>
        <MacroButton tone="red" className="w-full">全部裏印刷</MacroButton>
      </div>
      <MacroButton tone="gray" className="ml-10 w-[179px]">初期化</MacroButton>
    </div>
  );
}

function Cells({ n, className = "" }: { n: number; className?: string }) {
  return (
    <>
      {Array.from({ length: n }, (_, i) => (
        <td key={i} className={`border-r border-b ${GRID} ${className}`} />
      ))}
    </>
  );
}

function RowHead({ n, selected }: { n: number; selected?: boolean }) {
  return (
    <th
      scope="row"
      className={`border-b p-0 text-center align-middle text-[26px] leading-6 font-normal ${
        selected
          ? "border-r-3 border-r-[#217346] border-b-[#b5b5b5] bg-[#d2d2d2] text-[#1e6039]"
          : "border-r border-r-[#9b9b9b] border-b-[#bdbdbd] bg-[#e6e6e6]"
      }`}
    >
      {n}
    </th>
  );
}

function SheetRow({ n }: { n: number }) {
  const selected = n >= 3 && n <= 22;
  const height = n === 2 ? "h-8" : n === 3 ? "h-[33px]" : "h-[34px]";
  return (
    <tr className={height}>
      <RowHead n={n} selected={selected} />
      <Cells n={3} />
      {!selected && <Cells n={27} />}
      {n === 3 && (
        <td rowSpan={20} colSpan={27} className="relative bg-white text-center align-middle text-[60px] text-[#bfbfbf]">
          余<span className="text-5xl">　</span>白
          <span className="pointer-events-none absolute -top-[3px] -right-0.5 -bottom-0.5 -left-[3px] border-3 border-[#217346]" />
          <span className="absolute -right-1 -bottom-1 size-2.5 border border-white bg-[#217346]" />
        </td>
      )}
      <Cells n={2} />
      {!selected && <Cells n={10} />}
      {n === 3 && (
        <>
          <td rowSpan={2} colSpan={2} className={`border-r ${GRID} ${DOTTED}`} />
          <td rowSpan={2} colSpan={2} className={`border-r ${GRID} ${DOTTED}`} />
          <td rowSpan={2} colSpan={6} className={`border-r border-b ${GRID}`} />
        </>
      )}
      {selected && n >= 5 && n <= 19 && n % 2 === 1 && (
        <td rowSpan={2} colSpan={10} className={`border-r ${GRID} ${DOTTED}`} />
      )}
      {(n === 21 || n === 22) && <td colSpan={10} className={`border-r border-b ${GRID}`} />}
      <td className={`border-b ${GRID}`} />
      <td />
      {n === 2 ? (
        <td className="bg-[#ff0] p-0 pl-1 text-[26px] leading-7 font-bold whitespace-nowrap">ここから1ページ目</td>
      ) : n === 3 ? (
        <td className="p-0 pl-1 text-[26px] leading-7 font-bold">3枚版</td>
      ) : (
        <td />
      )}
      <td colSpan={22} />
    </tr>
  );
}

function Sheet() {
  return (
    <div className={`relative min-w-0 flex-1 overflow-hidden border-r border-[#9b9b9b] bg-white text-black ${SHEET}`}>
      <table className="w-full table-fixed border-separate border-spacing-0">
        <colgroup>
          <col className="w-[54px]" />
          {COLUMNS.map((c) => (
            <col key={c} className={c === "AS" ? "w-[355px]" : c === "BO" ? "" : "w-8"} />
          ))}
        </colgroup>
        <thead>
          <tr className="h-[34px]">
            <th className="border-r border-b border-[#9b9b9b] bg-[#e6e6e6] p-0">
              <svg viewBox="0 0 26 26" className="mr-1 ml-auto h-[26px] w-[26px]" aria-hidden="true">
                <path d="M26 0v26H0z" fill="#b4b4b4" />
              </svg>
            </th>
            {COLUMNS.map((c, i) => (
              <th
                key={c}
                scope="col"
                className={`overflow-hidden border-r p-0 text-center text-[28px] leading-7 font-normal whitespace-nowrap ${
                  i >= 3 && i < 30
                    ? "border-b-3 border-r-[#b5b5b5] border-b-[#217346] bg-[#d2d2d2] text-[#1e6039]"
                    : "border-b border-r-[#bdbdbd] border-b-[#9b9b9b] bg-[#e6e6e6]"
                }`}
              >
                {c}
              </th>
            ))}
          </tr>
        </thead>
        <tbody>
          <tr>
            <th
              scope="row"
              className="border-r border-b-2 border-[#9b9b9b] bg-[#e6e6e6] p-0 text-center align-bottom text-[26px] leading-7 font-normal"
            >
              1
            </th>
            <td colSpan={67} className="border-b-2 border-[#9b9b9b] p-0">
              <MacroBar />
            </td>
          </tr>
          {Array.from({ length: 23 }, (_, i) => (
            <SheetRow key={i} n={i + 2} />
          ))}
          <tr className="h-[34px]">
            <th className="border-r border-[#9b9b9b] bg-[#e6e6e6]" />
            <td className={`border-r ${GRID}`} />
            <td className={`border-r ${GRID}`} />
            <td className={`border-r ${GRID}`} />
            <td colSpan={27} className={`border-r ${GRID}`} />
            <td className={`border-r ${GRID}`} />
            <td className={`border-r ${GRID}`} />
            <td colSpan={2} className={`border-r ${GRID}`} />
            <td colSpan={2} className={`border-r ${GRID}`} />
            <td colSpan={6} className={`border-r ${GRID}`} />
            <td colSpan={25} />
          </tr>
        </tbody>
      </table>

      {/* Floating form, drawn over the cells */}
      <div className="absolute top-[297px] left-[1256px] h-[76px] w-[46px] overflow-hidden border-2 border-[#f9a02f] bg-[#f0ffff] shadow-[2px_4px_14px_rgba(0,0,0,0.4)]">
        <div className="flex h-14 items-center bg-[#c98129]">
          <svg viewBox="0 0 20 20" className="h-5 w-5" stroke="#111" strokeWidth="1.800"><path d="M0 0l20 20M20 0L0 20" /></svg>
        </div>
        <div className="h-4 overflow-hidden">
          <p className="-mt-3 text-lg leading-7 whitespace-nowrap [font-feature-settings:'palt']">コウ.</p>
        </div>
      </div>

      {/* Arrow shape marking the selected frame */}
      <div className="absolute top-[505px] left-[1487px] flex h-[142px] w-[250px] items-center justify-center pl-8 text-[29px]">
        <svg viewBox="0 0 250 142" className="absolute inset-0 h-full w-full">
          <defs>
            <linearGradient id="arrowFill">
              <stop offset="0" stopColor="#f00" />
              <stop offset="0.28" stopColor="#ff6a6a" />
              <stop offset="0.6" stopColor="#ffcfcf" />
              <stop offset="0.95" stopColor="#fff" />
            </linearGradient>
          </defs>
          <path d="M2 71L68 3v34h181v69H68v33z" fill="url(#arrowFill)" stroke="#000" strokeWidth="2" />
        </svg>
        <span className="relative">選択中</span>
      </div>
    </div>
  );
}

function VerticalScroll() {
  return (
    <div className="flex w-[38px] shrink-0 flex-col bg-[#e6e6e6] pr-[3px] pl-0.5">
      <button type="button" aria-label="上へスクロール" className="mt-px flex h-[33px] items-center justify-center border border-[#b5b5b5] bg-white">
        <svg viewBox="0 0 16 9" className="h-[9px] w-4" fill="#777"><path d="M0 9h16L8 0z" /></svg>
      </button>
      <div className="flex-1 bg-[#dadada]">
        <div className="h-[35%] border border-[#b5b5b5] bg-white" />
      </div>
      <button type="button" aria-label="下へスクロール" className="flex h-[33px] items-center justify-center border border-[#b5b5b5] bg-white">
        <svg viewBox="0 0 16 9" className="h-[9px] w-4" fill="#777"><path d="M0 0h16L8 9z" /></svg>
      </button>
    </div>
  );
}

/* ---------- bottom bars ---------- */

function SheetTabs() {
  return (
    <div className="flex h-[42px] shrink-0 border-t border-b border-t-[#9b9b9b] border-b-[#bdbdbd] bg-[#e6e6e6] text-2xl text-[#444]">
      <div className="flex w-[140px] items-center gap-8 pl-[34px]">
        <button type="button" aria-label="前のシート"><svg viewBox="0 0 8 14" className="h-3.5 w-2" fill="#bdbdbd"><path d="M8 0v14L0 7z" /></svg></button>
        <button type="button" aria-label="次のシート"><svg viewBox="0 0 8 14" className="h-3.5 w-2" fill="#bdbdbd"><path d="M0 0v14l8-7z" /></svg></button>
      </div>
      <button type="button" className="my-1 flex w-[131px] items-center justify-center border-l border-[#9b9b9b] pr-1 pb-1 text-[27px] leading-8 whitespace-nowrap">更新情報</button>
      <button type="button" className="my-1 flex w-[155px] items-center justify-center border-l border-[#9b9b9b] pr-1 pb-1 text-[26px] leading-8 whitespace-nowrap">写真仕分け</button>
      <button type="button" className="-mt-px mb-1 flex w-[131px] items-center justify-center border-x border-b-3 border-x-[#9b9b9b] border-b-[#217346] bg-white text-[27px] leading-8 whitespace-nowrap text-[#217346]">
        新規&nbsp;<span className="font-medium">(1)</span>
      </button>
      <button type="button" aria-label="新しいシート" className="ml-11 flex items-center">
        <svg viewBox="0 0 34 34" className="h-[34px] w-[34px]" fill="none" stroke="#777">
          <circle cx="17" cy="17" r="15" strokeWidth="2" />
          <path d="M17 9v16M9 17h16" strokeWidth="4" />
        </svg>
      </button>
      <div className="ml-auto flex w-[42%] items-center">
        <div className="flex w-[70px] flex-col items-center gap-1 pl-3">
          <span className="size-1 bg-[#aaa]" />
          <span className="size-1 bg-[#aaa]" />
          <span className="size-1 bg-[#aaa]" />
        </div>
        <button type="button" aria-label="左へスクロール" className="flex h-[33px] w-[33px] shrink-0 items-center justify-center border border-[#9b9b9b] bg-white">
          <svg viewBox="0 0 9 16" className="h-4 w-[9px]" fill="#777"><path d="M9 0v16L0 8z" /></svg>
        </button>
        <div className="-ml-px h-[33px] flex-1 bg-[#dadada]">
          <div className="h-full w-[57%] border border-[#9b9b9b] bg-white" />
        </div>
        <button type="button" aria-label="右へスクロール" className="mr-10 flex h-[33px] w-[33px] shrink-0 items-center justify-center border border-[#9b9b9b] bg-white">
          <svg viewBox="0 0 9 16" className="h-4 w-[9px]" fill="#777"><path d="M0 0v16l9-8z" /></svg>
        </button>
      </div>
    </div>
  );
}

function StatusBar() {
  return (
    <footer className="flex h-[42px] shrink-0 items-center bg-[#f1f1f1] pr-2.5 pl-2 text-2xl text-[#555]">
      <span>準備完了</span>
      <div className="ml-auto flex items-center">
        <button type="button" aria-label="標準" className="flex h-[42px] w-[52px] items-center justify-center bg-[#cacaca]">
          <svg viewBox="0 0 26 26" className="h-[26px] w-[26px]" fill="none" stroke="#666" strokeWidth="1.400"><path d="M1 1h24v24H1zM1 9h24M1 17h24M9 1v24M17 1v24" /></svg>
        </button>
        <button type="button" aria-label="ページ レイアウト" className="flex w-[52px] items-center justify-center">
          <svg viewBox="0 0 26 26" className="h-[26px] w-[26px]" fill="none" stroke="#666" strokeWidth="1.400"><path d="M1 1h24v24H1zM7 4h12v18H7zM10 8h6M10 11h6M10 14h6M10 17h6" /></svg>
        </button>
        <button type="button" aria-label="改ページ プレビュー" className="flex w-[52px] items-center justify-center">
          <svg viewBox="0 0 26 26" className="h-[26px] w-[26px]" fill="none" stroke="#666" strokeWidth="1.400"><path d="M1 1h24v24H1zM9 1v15M17 1v15M1 16h16" /></svg>
        </button>
        <button type="button" aria-label="縮小" className="flex h-8 w-7 items-center justify-center"><span className="h-1 w-3 bg-[#666]" /></button>
        <input
          type="range"
          aria-label="ズーム"
          min={10}
          max={190}
          defaultValue={100}
          className="h-6 w-[200px] appearance-none bg-[linear-gradient(#aaa,#aaa)] bg-[length:100%_2px] bg-center bg-no-repeat [&::-webkit-slider-thumb]:h-[22px] [&::-webkit-slider-thumb]:w-2 [&::-webkit-slider-thumb]:appearance-none [&::-webkit-slider-thumb]:bg-[#666]"
        />
        <button type="button" aria-label="拡大" className="flex h-8 w-8 items-center justify-center">
          <svg viewBox="0 0 16 16" className="h-4 w-4" stroke="#666" strokeWidth="3.500"><path d="M8 0v16M0 8h16" /></svg>
        </button>
        <span className="w-[82px] text-right text-[26px] leading-8">100%</span>
      </div>
    </footer>
  );
}

export default function App() {
  return (
    <div className={`flex h-screen flex-col overflow-hidden bg-[#e6e6e6] ${UI}`}>
      <header className="relative shrink-0 bg-[#217346]">
        <Ornament />
        <TitleBar />
        <RibbonTabs />
      </header>
      <Ribbon />
      <FormulaBar />
      <main className="flex min-h-0 flex-1">
        <Sheet />
        <VerticalScroll />
      </main>
      <SheetTabs />
      <StatusBar />
      <div className="flex h-0.5 shrink-0 bg-[#553210]">
        <div className="ml-[812px] w-[72px] bg-[#a05a1c]" />
      </div>
    </div>
  );
}
